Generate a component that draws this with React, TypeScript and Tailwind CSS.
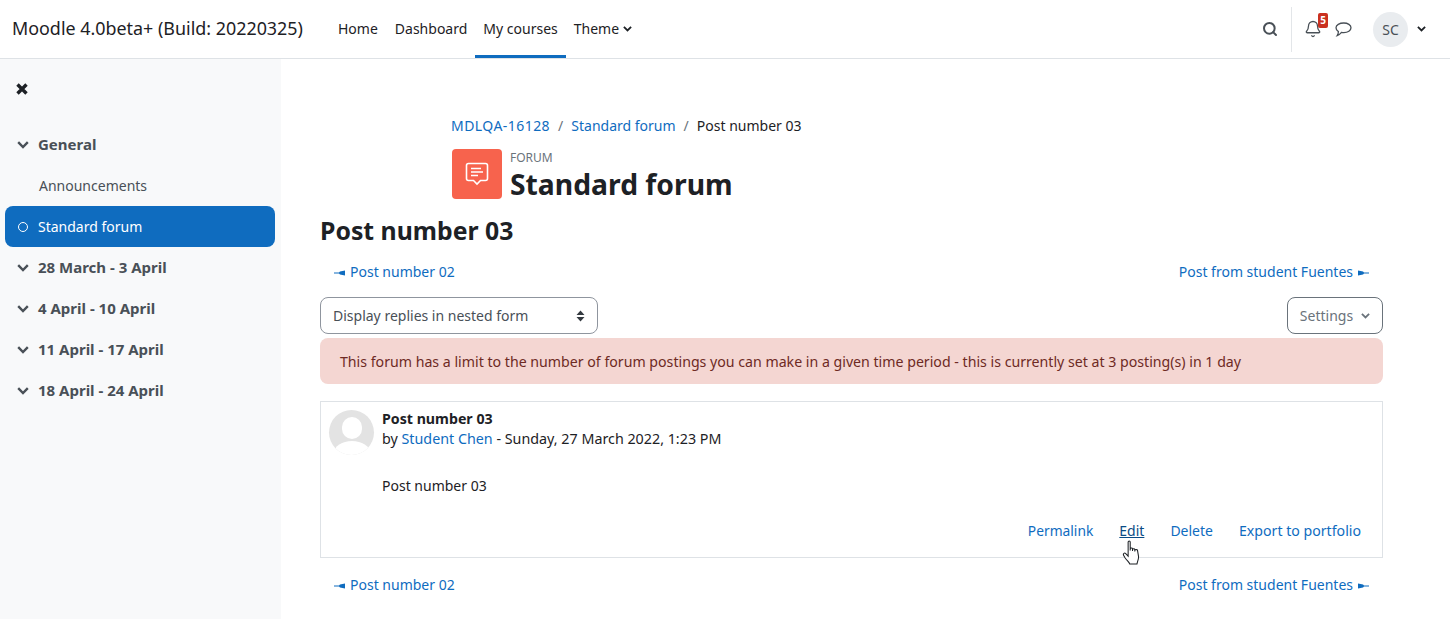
import React from 'react';
import { Search, Bell } from 'lucide-react';

const weeks = ['28 March - 3 April', '4 April - 10 April', '11 April - 17 April', '18 April - 24 April'];

const Chevron = ({ className = '' }: { className?: string }) => (
  <svg viewBox="0 0 12 8" className={className} fill="none" stroke="currentColor" strokeWidth="2.4">
    <path d="M1.2 1.2 L6 6 L10.8 1.2" />
  </svg>
);

const ArrowLeft = () => (
  <svg width="11" height="6" viewBox="0 0 11 6" className="inline-block mr-[5px] align-[1px]" fill="#0f6cbf">
    <path d="M0 2.5 H5 L6 1.5 L11 0.5 V5.5 L6 4.5 L5 3.5 H0 Z" />
  </svg>
);

const ArrowRight = () => (
  <svg width="11" height="6" viewBox="0 0 11 6" className="inline-block ml-[5px] align-[1px]" fill="#0f6cbf">
    <path d="M11 2.5 H6 L5 1.5 L0 0.5 V5.5 L5 4.5 L6 3.5 H11 Z" />
  </svg>
);

const PostNav = () => (
  <div className="flex justify-between px-[14px] text-[#0f6cbf]">
    <a>
      <ArrowLeft />
      Post number 02
    </a>
    <a>
      Post from student Fuentes
      <ArrowRight />
    </a>
  </div>
);

const Navbar = () => (
  <header className="h-[59px] shrink-0 bg-white border-b border-[#dee2e6] flex items-center pl-3 pr-[24px]">
    <div className="text-[17.9px] text-[#1d2125] w-[318px] pb-[2px]">Moodle 4.0beta+ (Build: 20220325)</div>
    <nav className="flex h-full items-stretch text-[#1d2125]">
      <a className="pl-2 pr-[9px] pb-[2px] flex items-center">Home</a>
      <a className="px-2 pb-[2px] flex items-center">Dashboard</a>
      <a className="px-2 flex items-center border-b-[3px] border-[#0f6cbf] pt-[1px]">My courses</a>
      <a className="px-2 pb-[2px] flex items-center gap-[4px]">
        Theme <Chevron className="w-[9px] h-[6px] mt-[2px]" />
      </a>
    </nav>
    <div className="ml-auto flex items-center text-[#495057]">
      <Search className="w-[16px] h-[16px] mr-[13px]" strokeWidth={3} />
      <div className="w-px h-[45px] bg-[#e3e6e9] mr-[12px]" />
      <div className="relative mr-[13px]">
        <Bell className="w-[18px] h-[18px]" strokeWidth={1.7} />
        <span className="absolute -top-[7px] left-[14px] w-[10px] h-[15px] bg-[#ca3120] rounded-[2px] text-white text-[10px] font-bold leading-[15px] text-center">
          5
        </span>
      </div>
      <svg width="17" height="15" viewBox="0 0 17 15" fill="none" stroke="#495057" strokeWidth="1.3" className="mr-[21px]">
        <path d="M8.8 1 C12.8 1 16 3 16 5.8 C16 8.6 12.8 10.6 8.8 10.6 C8 10.6 7.2 10.5 6.5 10.4 C5.5 11.6 4 13 2.2 13.6 C3 12.4 3.4 11 3.4 9.6 C1.9 8.7 1 7.4 1 5.8 C1 3 4.4 1 8.8 1 Z" />
      </svg>
      <div className="w-[35px] h-[35px] rounded-full bg-[#e9ecef] text-[#495057] flex items-center justify-center text-[14px] mr-[9px]">
        SC
      </div>
      <Chevron className="w-[9px] h-[6px] text-[#1d2125]" />
    </div>
  </header>
);

const Sidebar = () => (
  <aside className="w-[281px] shrink-0 bg-[#f8f9fa] text-[#495057] pl-[5px] pr-[6px]">
    <div className="h-[60px] pl-[11px] pt-[24px]">
      <svg width="12" height="12" viewBox="0 0 12 12" stroke="#1d2125" strokeWidth="3.4">
        <path d="M1.5 1.5 L10.5 10.5 M10.5 1.5 L1.5 10.5" />
      </svg>
    </div>
    <div className="h-[51px] flex items-center pl-[12px] gap-[9px] font-bold text-[15px]">
      <Chevron className="w-[12px] h-[8px]" />
      General
    </div>
    <div className="h-[31px] flex items-center pl-[34px]">Announcements</div>
    <div className="h-[41px] mt-[5px] flex items-center pl-[13px] gap-[10px] rounded-[8px] bg-[#0f6cbf] text-white">
      <span className="w-[10px] h-[10px] rounded-full border-[1.5px] border-white" />
      Standard forum
    </div>
    {weeks.map((w) => (
      <div key={w} className="h-[41px] flex items-center pl-[12px] gap-[9px] font-bold text-[15px]">
        <Chevron className="w-[12px] h-[8px]" />
        {w}
      </div>
    ))}
  </aside>
);

const HandCursor = () => (
  <svg
    width="18"
    height="25"
    viewBox="0 0 16.5 24"
    className="absolute left-[3px] top-[19px]"
    fill="#fff"
    stroke="#1d2125"
    strokeWidth="1"
  >
    <path d="M5.5 2 C5.5 0.6 7.5 0.6 7.5 2 V10 V8.5 C7.5 7.3 9.7 7.3 9.7 8.5 V10.5 V9.2 C9.7 8 11.9 8 11.9 9.2 V11 V10 C11.9 8.9 14.5 8.9 14.5 10 L15.5 16 C15.5 19 14.5 20 14 23 H7 C6.5 21 4.5 20 2.5 17 L1 14.5 C0.4 13 2 12 3.2 13 L5.5 15.5 Z" />
  </svg>
);

export default function App() {
  return (
    <div
      className="w-[1450px] h-[619px] overflow-hidden flex flex-col bg-white text-[14px] text-[#1d2125]"
      style={{ fontFamily: '"Noto Sans", sans-serif' }}
    >
      <Navbar />
      <div className="flex flex-1 min-h-0">
        <Sidebar />
        <main className="flex-1 pl-[39px] pr-[67px]">
          <div className="pl-[131px] pt-[56px]">
            <div className="flex items-center h-[20px] gap-[8px] text-[#0f6cbf]">
              <a className="tracking-[0.45px]">MDLQA-16128</a>
              <span className="text-[#6a737b]">/</span>
              <a>Standard forum</a>
              <span className="text-[#6a737b]">/</span>
              <span className="text-[#1d2125]">Post number 03</span>
            </div>
            <div className="flex mt-[14px] ml-[1px] gap-[8px]">
              <div className="w-[50px] h-[50px] rounded-[4px] bg-[#f7634d] flex items-center justify-center">
                <svg width="26" height="26" viewBox="0 0 26 26" fill="none" stroke="#fff" strokeWidth="1.6">
                  <path d="M4.5 2.5 H21.5 Q23.5 2.5 23.5 4.5 V17.5 Q23.5 19.5 21.5 19.5 H16.5 L13 23 L9.5 19.5 H4.5 Q2.5 19.5 2.5 17.5 V4.5 Q2.5 2.5 4.5 2.5 Z" />
                  <path d="M7 7.5 H17 M7 11 H19 M7 14.5 H14" />
                </svg>
              </div>
              <div>
                <div className="text-[12px] leading-[17px] text-[#6a737b]">FORUM</div>
                <h1 className="text-[28.3px] leading-[36px] font-bold">Standard forum</h1>
              </div>
            </div>
          </div>
          <h2 className="text-[24.8px] leading-[32px] font-bold mt-[12px]">Post number 03</h2>
          <div className="mt-[15px]">
            <PostNav />
          </div>
          <div className="flex justify-between mt-[15px]">
            <div className="w-[278px] h-[37px] border border-[#8f959e] rounded-[8px] flex items-center justify-between pl-[12px] pr-[12px] text-[#495057]">
              Display replies in nested form
              <svg width="9" height="12" viewBox="0 0 9 12" fill="#343a40">
                <path d="M4.5 0.5 L8.5 5 H0.5 Z M4.5 11.5 L0.5 7 H8.5 Z" />
              </svg>
            </div>
            <div className="w-[96px] h-[37px] border border-[#6a737b] rounded-[8px] flex items-center justify-center gap-[8px] text-[#6a737b]">
              Settings
              <Chevron className="w-[9px] h-[6px]" />
            </div>
          </div>
          <div className="mt-[4px] h-[46px] pt-[1px] rounded-[8px] bg-[#f4d6d2] text-[#6e2a24] text-[14.17px] flex items-center px-[20px]">
            This forum has a limit to the number of forum postings you can make in a given time period - this is currently set at 3 posting(s) in 1 day
          </div>
          <article className="mt-[17px] h-[157px] border border-[#dee2e6] flex flex-col">
            <div className="flex pt-[7px] pl-[8px] gap-[8px]">
              <div className="w-[45px] h-[45px] mt-[1px] rounded-full bg-[#e3e3e3] overflow-hidden relative shrink-0">
                <div className="absolute left-[13px] top-[7px] w-[20px] h-[22px] rounded-full bg-white" />
                <div className="absolute left-[5px] top-[31px] w-[36px] h-[24px] rounded-[50%] bg-white" />
              </div>
              <div>
                <div className="font-bold text-[14.2px] leading-[20px]">Post number 03</div>
                <div className="leading-[20px] text-[14.3px]">
                  by <a className="text-[#0f6cbf]">Student Chen</a> - Sunday, 27 March 2022, 1:23 PM
                </div>
                <p className="mt-[27px] leading-[20px]">Post number 03</p>
              </div>
            </div>
            <div className="mt-auto mb-[16px] flex justify-end items-baseline gap-[26px] pr-[21px] text-[#0f6cbf] leading-[20px]">
              <a className="text-[13.8px]">Permalink</a>
              <a className="relative text-[#0a4b85] underline">
                Edit
                <HandCursor />
              </a>
              <a>Delete</a>
              <a className="text-[14.15px]">Export to portfolio</a>
            </div>
          </article>
          <div className="mt-[16px]">
            <PostNav />
          </div>
        </main>
      </div>
    </div>
  );
}
